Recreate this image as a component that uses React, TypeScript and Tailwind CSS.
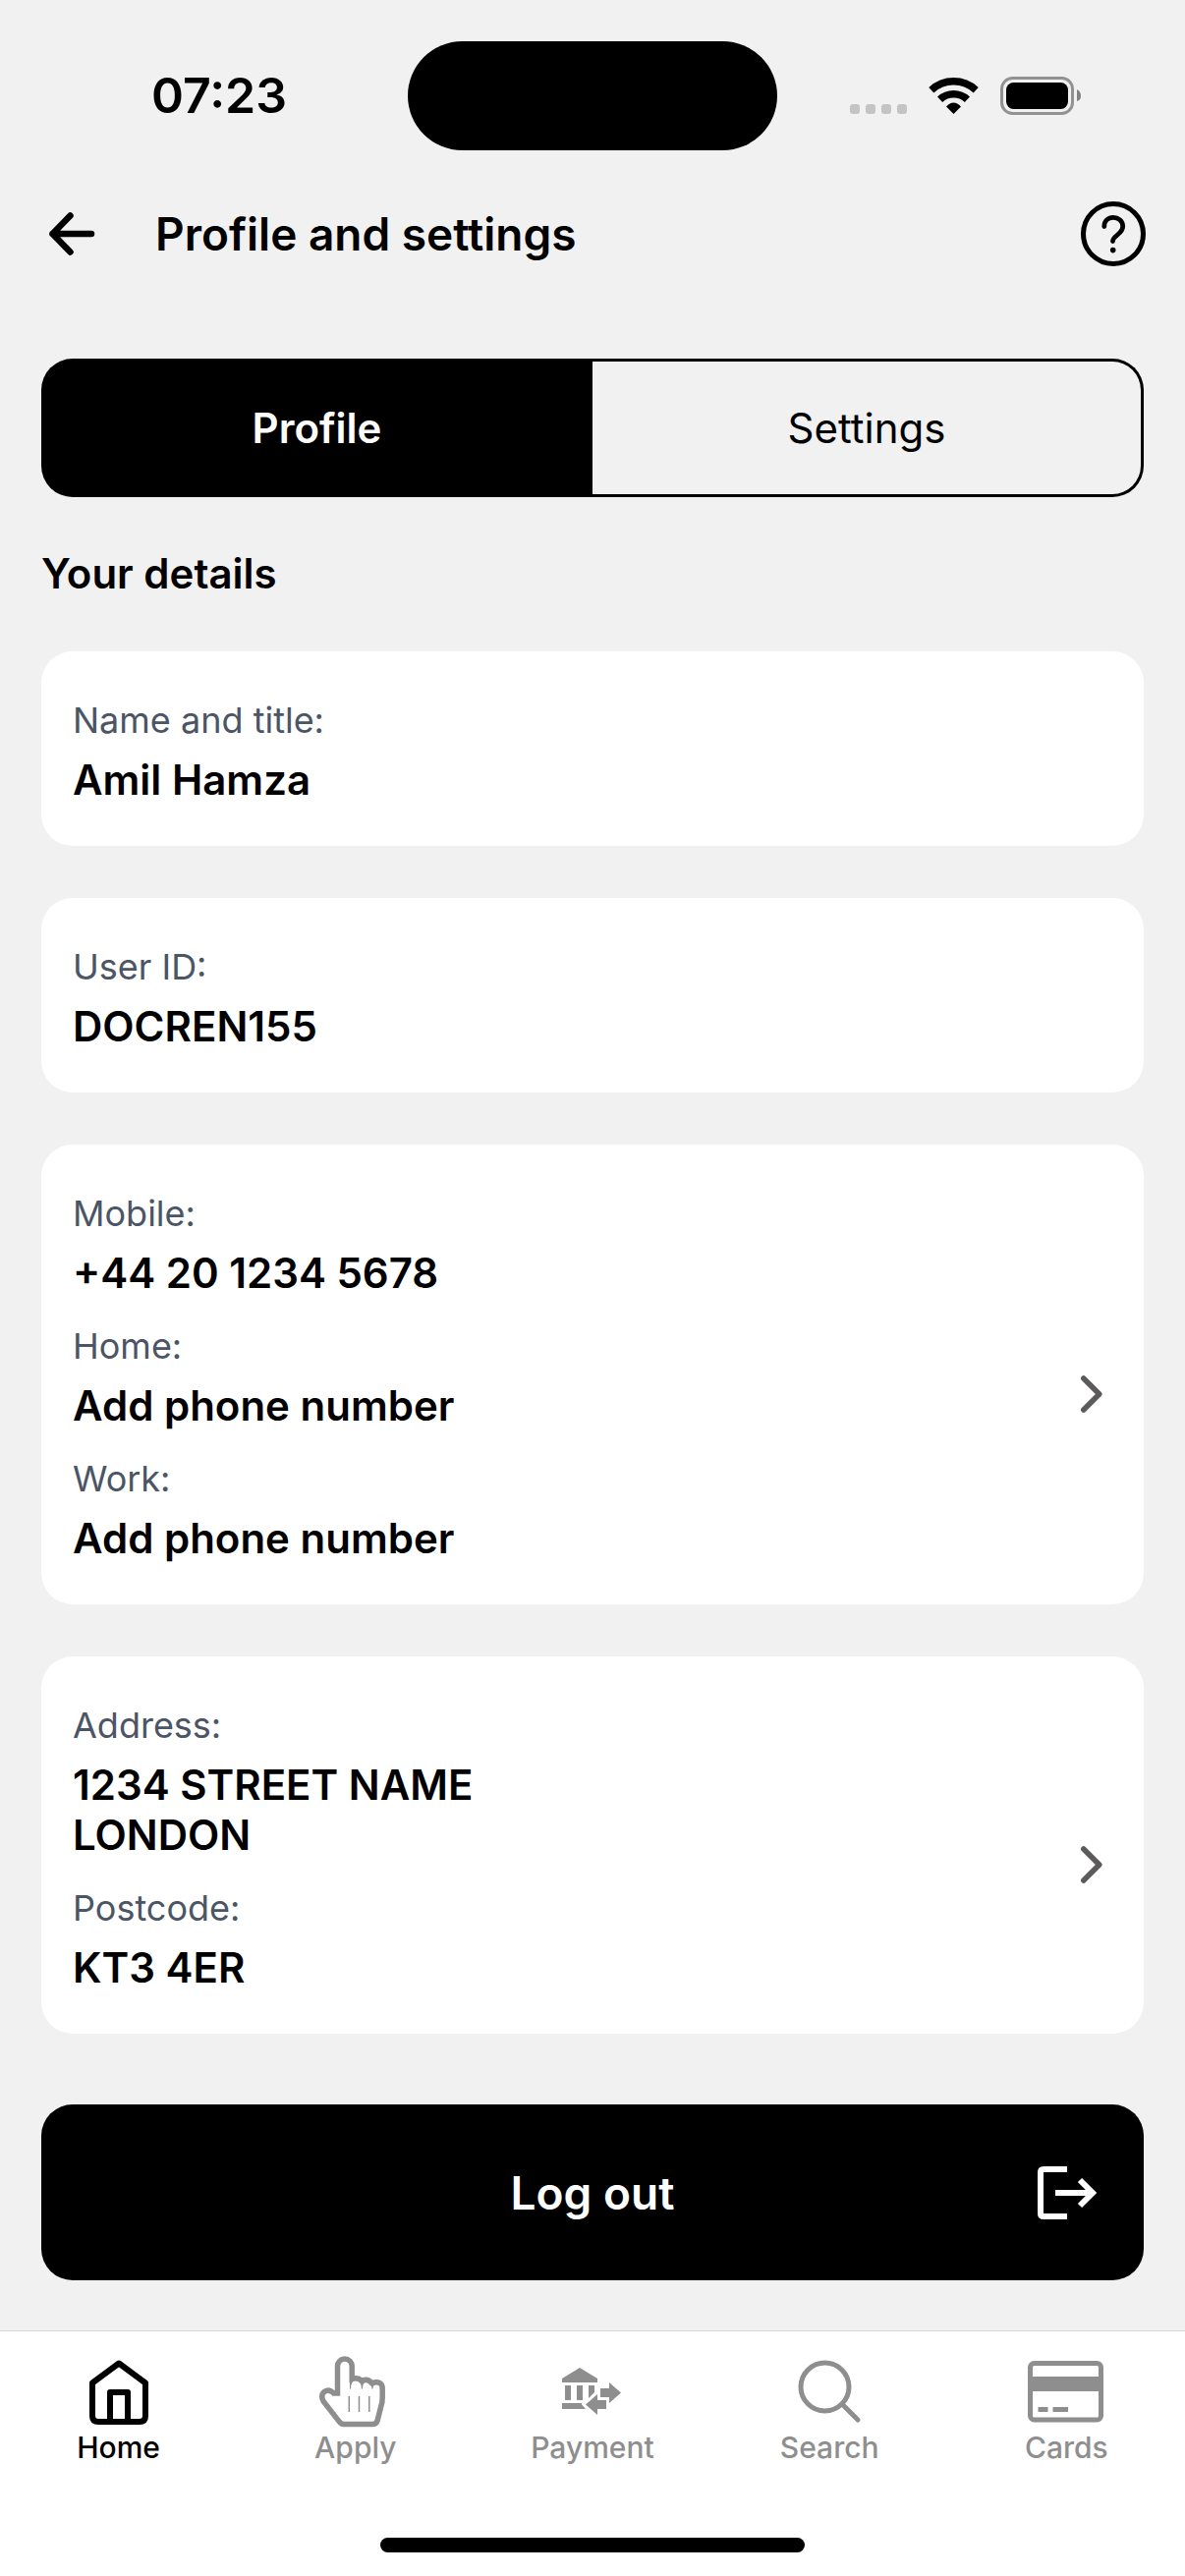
import React from "react";

type Field = { label: string; lines: string[] };

const cards: { fields: Field[]; action?: string }[] = [
  { fields: [{ label: "Name and title:", lines: ["Amil Hamza"] }] },
  { fields: [{ label: "User ID:", lines: ["DOCREN155"] }] },
  {
    action: "Edit phone numbers",
    fields: [
      { label: "Mobile:", lines: ["+44 20 1234 5678"] },
      { label: "Home:", lines: ["Add phone number"] },
      { label: "Work:", lines: ["Add phone number"] },
    ],
  },
  {
    action: "Edit address",
    fields: [
      { label: "Address:", lines: ["1234 STREET NAME", "LONDON"] },
      { label: "Postcode:", lines: ["KT3 4ER"] },
    ],
  },
];

function StatusBar() {
  return (
    <div className="grid h-[194px] grid-cols-[1fr_auto_1fr] items-center">
      <time className="pl-[154px] text-[50px] leading-[60px] font-semibold">07:23</time>
      <div className="h-[111px] w-[376px] rounded-full bg-black" />
      <div className="flex items-center justify-end pr-[105px]">
        <svg className="h-[46px] w-[238px]" viewBox="863 74 238 46" aria-hidden="true">
          <g fill="#c4c4c4">
            <rect x="865" y="106" width="10" height="10" rx="3" />
            <rect x="881" y="106" width="10" height="10" rx="3" />
            <rect x="897" y="106" width="10" height="10" rx="3" />
            <rect x="913" y="106" width="10" height="10" rx="3" />
          </g>
          <g fill="none" stroke="#000" strokeWidth="7.500">
            <path d="M947.800 91.700A33.300 33.300 0 0 1 993.200 91.700" />
            <path d="M956.600 101.200A20.300 20.300 0 0 1 984.400 101.200" />
          </g>
          <path d="M970.500 116L963 108.500Q970.500 100.500 978 108.500Z" />
          <rect x="1019.500" y="79.500" width="72" height="36" rx="11" fill="none" stroke="#929292" strokeWidth="3" />
          <rect x="1024" y="84" width="63" height="27" rx="7.500" />
          <path d="M1096 91Q1100 93 1100 97.500Q1100 102 1096 103Z" fill="#808080" />
        </svg>
      </div>
    </div>
  );
}

function Header() {
  return (
    <header className="flex h-[88px] items-center pr-[40px] pl-[48px]">
      <button type="button" aria-label="Back" className="w-[110px]">
        <svg className="size-[50px]" viewBox="0 0 50 50" fill="none" stroke="#000" strokeWidth="6.500" strokeLinecap="round" strokeLinejoin="round" aria-hidden="true">
          <path d="M45 25H5.500M23.500 6.500L5.500 25l18 18.500" />
        </svg>
      </button>
      <h1 className="flex-1 text-[46px] leading-[56px] font-semibold">Profile and settings</h1>
      <button type="button" aria-label="Help">
        <svg className="size-[66px]" viewBox="0 0 66 66" fill="none" stroke="#000" strokeLinecap="round" aria-hidden="true">
          <circle cx="33" cy="33" r="30.500" strokeWidth="5" />
          <path d="M23.800 25.500C23.800 19.500 28 16.300 33 16.300s9.700 3.500 9.700 9.200c0 7.500-10.200 9.500-10.200 15" strokeWidth="4.800" />
          <circle cx="32.700" cy="49.600" r="2.800" fill="#000" stroke="none" />
        </svg>
      </button>
    </header>
  );
}

function Tabs() {
  return (
    <div role="tablist" className="grid h-[141px] grid-cols-2 text-[42px] leading-[50px]">
      <button type="button" role="tab" aria-selected="true" className="rounded-l-[32px] bg-black font-semibold text-white">
        Profile
      </button>
      <button type="button" role="tab" aria-selected="false" className="rounded-r-[32px] border-y-[3px] border-r-[3px] border-black">
        Settings
      </button>
    </div>
  );
}

function DetailCard({ fields, action }: { fields: Field[]; action?: string }) {
  return (
    <section className="flex items-center rounded-[32px] bg-white px-[32px] pt-[45px] pb-[42px]">
      <dl className="flex flex-1 flex-col gap-[24px]">
        {fields.map((field) => (
          <div key={field.label}>
            <dt className="text-[36px] leading-[50px] text-[#4b5565]">{field.label}</dt>
            <dd className="pt-[10px] text-[42px] leading-[51px] font-semibold">
              {field.lines.map((line) => (
                <div key={line}>{line}</div>
              ))}
            </dd>
          </div>
        ))}
      </dl>
      {action && (
        <button type="button" aria-label={action} className="pt-[36px]">
          <svg className="size-[44px]" viewBox="0 0 44 44" fill="none" stroke="#5c5a5b" strokeWidth="5.500" strokeLinecap="round" strokeLinejoin="round" aria-hidden="true">
            <path d="M14.800 6l16 16-16 16" />
          </svg>
        </button>
      )}
    </section>
  );
}

function HomeIcon() {
  return (
    <svg className="size-[78px]" viewBox="81 2395 78 78" fill="none" stroke="currentColor" strokeWidth="6" strokeLinejoin="round" aria-hidden="true">
      <path d="M93 2426.500L120 2406.500L147 2426.500V2460q0 6-6 6H99q-6 0-6-6zM111 2466V2436h18v30" />
    </svg>
  );
}

function ApplyIcon() {
  return (
    <svg className="size-[78px]" viewBox="323 2395 78 78" fill="none" stroke="currentColor" aria-hidden="true">
      <path
        strokeWidth="5.500"
        strokeLinejoin="miter"
        d="M343.500 2437V2409.500a7.300 7.500 0 0 1 14.700 0V2422.500q6-2 10 2 6-3 10 2 11-3 11 6v9q0 5-1.500 9l-3.500 14q-1 4-5 4H350q-3 0-5-3L329 2445q-3-6 1-9.500 5-3.500 9.500 1.500z"
      />
      <path
        fill="currentColor"
        stroke="none"
        d="M356 2420v12.500h1q0-8.500 5-8.500 5.500 0 6 8.500h1q0-7.500 4.500-7.500t5 7.500h1q0-4.500 4.500-5l-8-4-10-3z"
      />
      <path strokeWidth="1.500" d="M355.300 2440v16M365.500 2440v16M375.800 2440v16" />
    </svg>
  );
}

function PaymentIcon() {
  return (
    <svg className="size-[78px]" viewBox="564 2395 78 78" fill="currentColor" aria-hidden="true">
      <path d="M572 2422l18-11 18 11v4h-36zM575 2429h6v15h-6zM587 2429h6v15h-6zM599 2429h6v7l-6 6zM572 2447h20v1.500l4 4.500h-24z" />
      <path d="M611 2432h9v-6l12 10.500-12 10.500v-6h-9zM617 2444h-9v-6l-12 10.500 12 10.500v-6h9z" />
    </svg>
  );
}

function SearchIcon() {
  return (
    <svg className="size-[78px]" viewBox="805 2395 78 78" fill="none" stroke="currentColor" strokeWidth="5" strokeLinecap="round" aria-hidden="true">
      <circle cx="839.500" cy="2430.500" r="24.500" />
      <path d="M857 2448l16 16" />
    </svg>
  );
}

function CardsIcon() {
  return (
    <svg className="size-[78px]" viewBox="1046 2395 78 78" aria-hidden="true">
      <rect x="1048.500" y="2406.500" width="72" height="57.500" rx="4" fill="none" stroke="currentColor" strokeWidth="5" />
      <path d="M1048 2420h73v15h-73zM1056.500 2451h10v5h-10zM1071.500 2451h15.500v5h-15.500z" fill="currentColor" />
    </svg>
  );
}

const tabs = [
  { label: "Home", Icon: HomeIcon, active: true },
  { label: "Apply", Icon: ApplyIcon },
  { label: "Payment", Icon: PaymentIcon },
  { label: "Search", Icon: SearchIcon },
  { label: "Cards", Icon: CardsIcon },
];

function BottomNav() {
  return (
    <nav className="border-t border-[#d8d8d8] bg-white pt-[21px] pb-[24px]">
      <ul className="grid grid-cols-5">
        {tabs.map(({ label, Icon, active }) => (
          <li key={label}>
            <a href="#" aria-current={active ? "page" : undefined} className={active ? "flex flex-col items-center text-black" : "flex flex-col items-center text-[#8e8e8e]"}>
              <Icon />
              <span className="text-[30px] leading-[38px] font-medium">{label}</span>
            </a>
          </li>
        ))}
      </ul>
      <div className="mx-auto mt-[73px] h-[15px] w-[432px] rounded-full bg-black" />
    </nav>
  );
}

export default function App() {
  return (
    <div className="flex min-h-screen flex-col bg-[#f1f1f1] font-['Inter',sans-serif] text-black">
      <StatusBar />
      <Header />
      <main className="flex flex-1 flex-col px-[42px] pt-[83px]">
        <Tabs />
        <h2 className="pt-[53px] text-[42px] leading-[50px] font-semibold">Your details</h2>
        <div className="flex flex-col gap-[53px] pt-[54px]">
          {cards.map((card) => (
            <DetailCard key={card.fields[0].label} {...card} />
          ))}
        </div>
        <button type="button" className="mt-[72px] grid h-[179px] grid-cols-[1fr_auto_1fr] items-center rounded-[32px] bg-black px-[42px] text-white">
          <span className="col-start-2 text-[46px] leading-[56px] font-semibold">Log out</span>
          <svg className="size-[72px] justify-self-end" viewBox="1050 2195 72 72" fill="none" stroke="currentColor" strokeWidth="6" aria-hidden="true">
            <path d="M1086 2207h-24q-3 0-3 3v42q0 3 3 3h24" />
            <path d="M1074 2231h38M1099 2218l13 13-13 13" />
          </svg>
        </button>
      </main>
      <BottomNav />
    </div>
  );
}
